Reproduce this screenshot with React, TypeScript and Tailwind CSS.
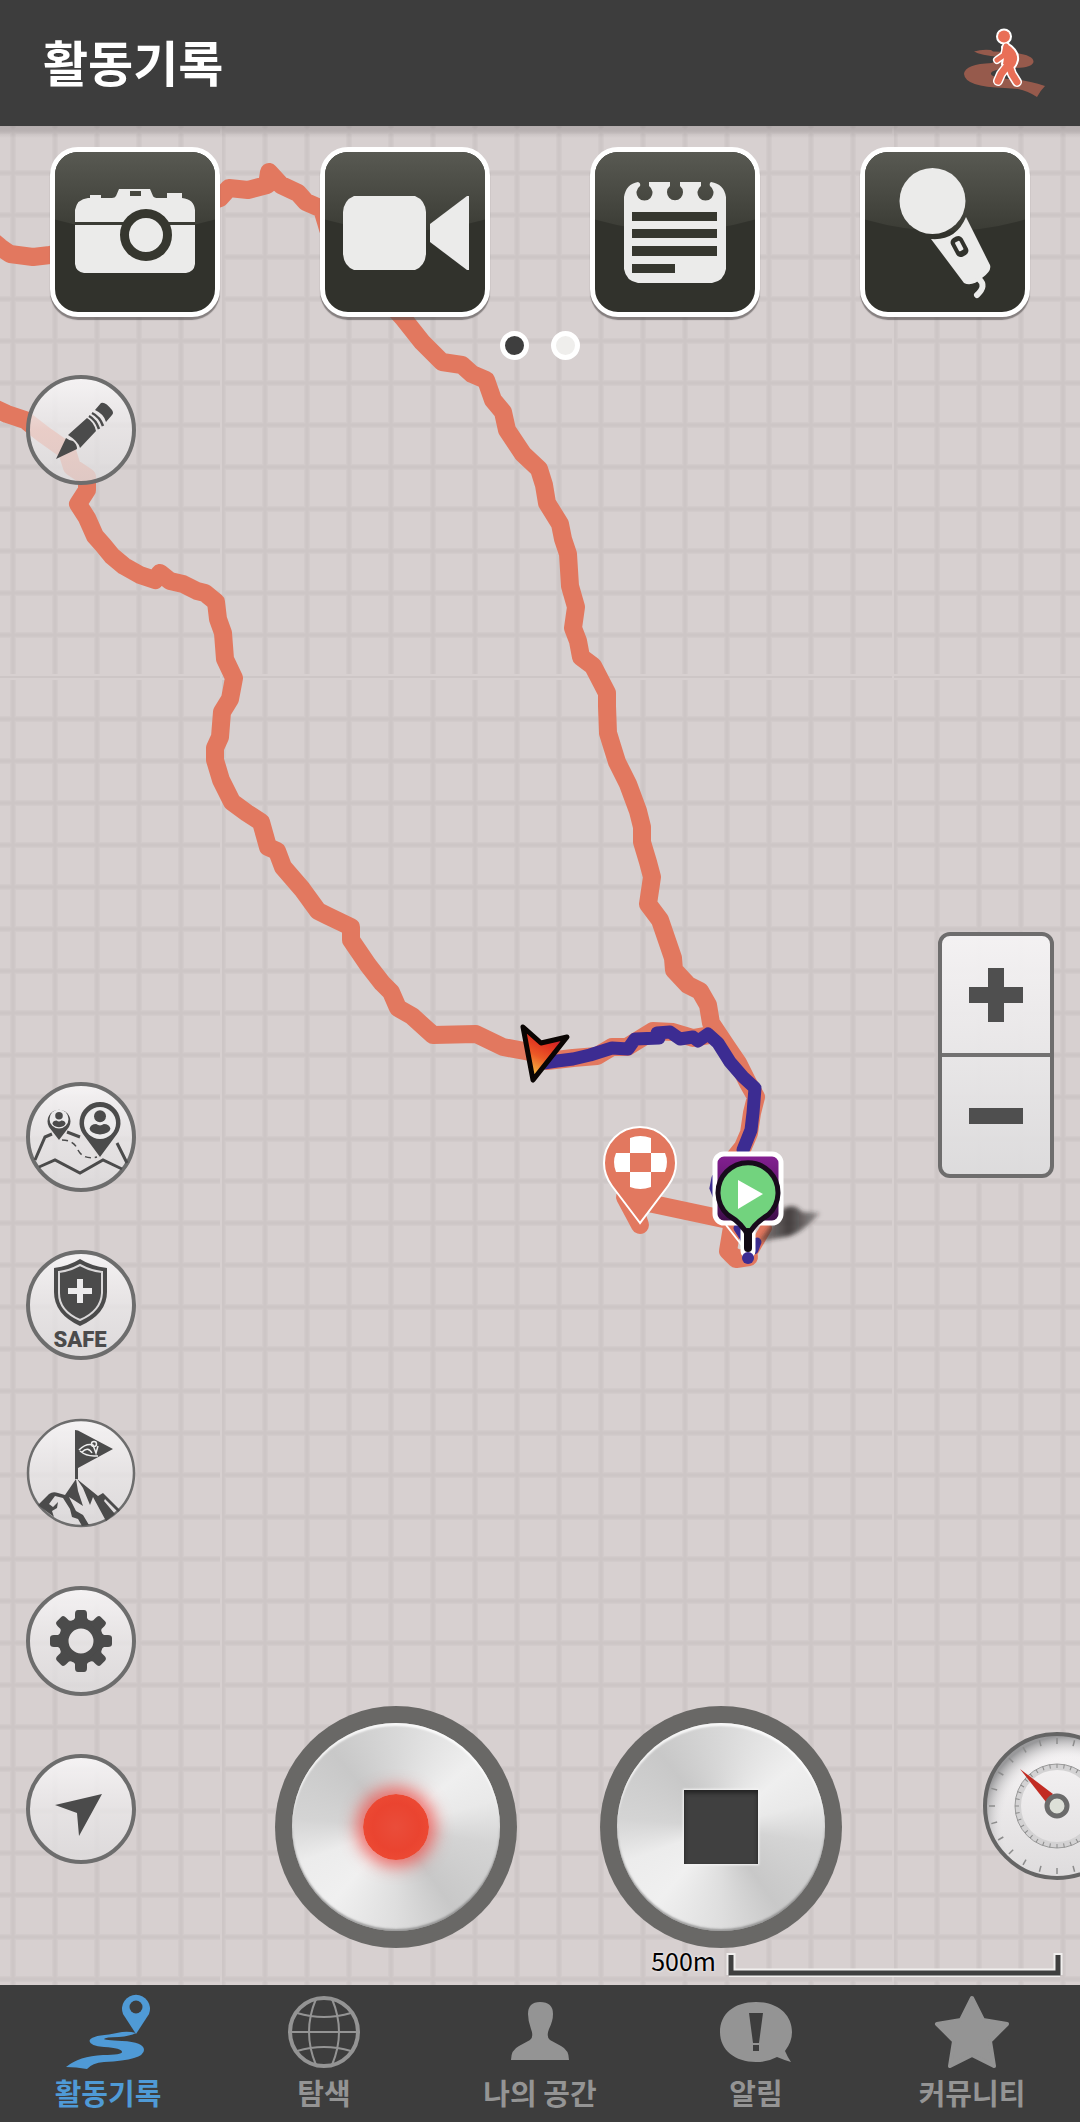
import type { ReactNode } from 'react';

function ActionButton({ label, children }: { label: string; children: ReactNode }) {
  return (
    <button
      aria-label={label}
      className="relative h-[170px] w-[170px] overflow-hidden rounded-[28px] border-[5px] border-white bg-[#31322c] shadow-[0_3px_1px_rgba(80,75,75,0.6)]"
    >
      <svg viewBox="5 5 160 160" className="block h-full w-full" fill="#ebebea" aria-hidden="true">
        <defs>
          <linearGradient id="gloss" x1="0" y1="0" x2="0" y2="1">
            <stop offset="0" stopColor="#5a5b54" />
            <stop offset="1" stopColor="#3b3c35" />
          </linearGradient>
        </defs>
        <path d="M0 0H170V71Q85 97 0 71Z" fill="url(#gloss)" />
        {children}
      </svg>
    </button>
  );
}

function RoundButton({ label, thin, children }: { label: string; thin?: boolean; children: ReactNode }) {
  return (
    <button aria-label={label} className="h-[110px] w-[110px] shrink-0 rounded-full">
      <svg viewBox="0 0 110 110" className="block h-full w-full" fill="#4b4b4b" aria-hidden="true">
        <defs>
          <linearGradient id="disc" x1="0" y1="0" x2="0" y2="1">
            <stop offset="0" stopColor="#f7f5f6" stopOpacity="0.95" />
            <stop offset="0.5" stopColor="#ebe9ea" stopOpacity="0.75" />
            <stop offset="1" stopColor="#dedcdd" stopOpacity="0.8" />
          </linearGradient>
        </defs>
        <circle cx="55" cy="55" r="53" fill="url(#disc)" stroke="#6d6d6d" strokeWidth={thin ? 2.5 : 4} />
        {children}
      </svg>
    </button>
  );
}

function KnobButton({ label, children }: { label: string; children: ReactNode }) {
  return (
    <button
      aria-label={label}
      className="flex h-[242px] w-[242px] shrink-0 items-center justify-center rounded-full bg-[#696866]"
    >
      <span className="flex h-[208px] w-[208px] items-center justify-center rounded-full bg-[conic-gradient(from_0deg,#d8d8d8,#efefef_50deg,#e9e9e9_75deg,#d4d4d4_100deg,#c8c8c8_145deg,#dedede_180deg,#f0f0f0_220deg,#ececec_250deg,#d4d4d4_275deg,#c8c8c8_320deg,#d8d8d8)] shadow-[inset_0_3px_2px_rgba(255,255,255,0.8),inset_0_-2px_2px_rgba(110,110,110,0.6)]">
        {children}
      </span>
    </button>
  );
}

function PersonBadge({ x, y, s }: { x: number; y: number; s: number }) {
  return (
    <g transform={`translate(${x} ${y}) scale(${s})`}>
      <circle cy="-7" r="6.3" />
      <path d="M-11 6Q-10 1 -4 1Q0 4 4 1Q10 1 11 6Q10 11 0 12Q-10 11 -11 6Z" />
    </g>
  );
}

const ticks = Array.from({ length: 24 }, (_, i) => i * 15);
const innerTicks = Array.from({ length: 36 }, (_, i) => i * 10);
const teeth = [0, 45, 90, 135, 180, 225, 270, 315];

function MapCanvas() {
  return (
    <svg
      viewBox="0 126 1080 1859"
      preserveAspectRatio="xMidYMin slice"
      className="absolute inset-0 h-full w-full"
      aria-hidden="true"
    >
      <defs>
        <pattern id="grid" x="13" y="131" width="42" height="42" patternUnits="userSpaceOnUse">
          <path d="M0 0V42M42 0V42M0 0H42M0 42H42" stroke="#d2cbcb" strokeWidth="6" />
          <path d="M0 0V42M42 0V42M0 0H42M0 42H42" stroke="#cdc6c6" strokeWidth="3" />
        </pattern>
        <linearGradient id="shade" x1="0" y1="0" x2="0" y2="1">
          <stop offset="0" stopColor="#7d7677" stopOpacity="0.4" />
          <stop offset="1" stopColor="#7d7677" stopOpacity="0" />
        </linearGradient>
        <linearGradient id="arrow" x1="0.7" y1="0" x2="0.3" y2="1">
          <stop offset="0" stopColor="#a8194e" />
          <stop offset="0.3" stopColor="#dd2c20" />
          <stop offset="0.6" stopColor="#ec5a26" />
          <stop offset="1" stopColor="#fbd34a" />
        </linearGradient>
        <linearGradient id="purple" x1="0" y1="0" x2="0" y2="1">
          <stop offset="0" stopColor="#852093" />
          <stop offset="1" stopColor="#3d0d49" />
        </linearGradient>
        <linearGradient id="cast" x1="0" y1="0" x2="1" y2="0">
          <stop offset="0" stopColor="#2b2727" stopOpacity="0.45" />
          <stop offset="0.5" stopColor="#2b2727" stopOpacity="0.85" />
          <stop offset="1" stopColor="#2b2727" stopOpacity="0.35" />
        </linearGradient>
        <filter id="soft" x="-30%" y="-30%" width="160%" height="160%">
          <feGaussianBlur stdDeviation="2" />
        </filter>
      </defs>
      <rect y="126" width="1080" height="1859" fill="#d7d0d0" />
      <rect y="126" width="1080" height="1859" fill="url(#grid)" />
      <path d="M221 126V1985M893 126V1985M0 675H1080M0 679H1080" stroke="#d7d0d0" strokeWidth="2" />
      <rect y="126" width="1080" height="12" fill="url(#shade)" />

      <g fill="none" stroke="#e2785f" strokeWidth="18" strokeLinejoin="round" strokeLinecap="round">
        <path d="M-6 242L0 247L10 254L33 257L50 255L90 245L220 198L229 188L248 190L267 185L269 172L281 185L298 193L306 202L322 209L328 229L340 250L403 318L422 342L442 362L462 365L472 374L486 380L493 400L503 412L507 430L523 454L539 469L544 485L547 503L560 524L563 539L568 554L570 586L576 607L573 628L578 641L581 657L593 666L607 693L607 706L608 733L612 746L617 762L628 784L638 811L642 827L642 842L648 862L652 877L648 904L660 920L673 958L674 970L688 985L700 991L708 1005L711 1023L727 1047L738 1063L748 1083L756 1097L752 1113L749 1133L743 1147L727 1167" />
        <path d="M-6 408L7 414L25 420L43 434L67 451L72 467L87 477L87 490L78 504L87 518L95 536L103 545L112 556L124 566L140 575L155 580L160 573L170 581L183 584L197 591L205 593L216 602L218 619L223 633L225 659L234 678L230 699L222 712L220 737L215 748L215 760L221 780L232 802L247 813L261 822L268 847L277 851L283 867L302 889L318 911L328 916L351 927L351 940L368 965L382 983L391 992L398 1008L412 1016L433 1035L476 1034L503 1047L530 1052L547 1061L573 1058L597 1056L612 1047L627 1047L653 1031L673 1032L693 1038L710 1035" />
        <path d="M625 1197L640 1225L630 1195L653 1204L733 1221L728 1251L736 1259L749 1257" />
        <path d="M749 1257L766 1228" strokeWidth="12" />
      </g>
      <path
        d="M537 1064L557 1061L573 1059L590 1055L612 1048L628 1049L635 1039L659 1038L657 1033L670 1032L680 1039L693 1037L698 1041L708 1034L718 1043L730 1062L743 1077L755 1088L753 1113L751 1130L743 1150"
        fill="none"
        stroke="#3c2c92"
        strokeWidth="13"
        strokeLinejoin="round"
        strokeLinecap="round"
      />
      <path
        d="M716 1178L714 1188L718 1198M738 1228L747 1242M757 1242L754 1250"
        fill="none"
        stroke="#3c2c92"
        strokeWidth="9"
        strokeLinecap="round"
      />
      <path
        d="M523 1027L541 1043L567 1037L533 1080Z"
        fill="url(#arrow)"
        stroke="#0a0503"
        strokeWidth="5"
        strokeLinejoin="round"
      />

      <path
        d="M640 1223L612 1186Q604 1175 604 1163A36 36 0 0 1 676 1163Q676 1175 668 1186Z"
        fill="#e2785f"
        stroke="#fff"
        strokeWidth="2"
      />
      <path
        d="M630 1153V1138Q640 1134 651 1138V1153ZM630 1172V1187Q640 1191 651 1187V1172ZM630 1153H616Q612 1162 616 1172H630ZM651 1153H665Q669 1162 665 1172H651Z"
        fill="#fff"
      />

      <path
        d="M758 1243Q770 1225 784 1208Q795 1203 802 1212L820 1213Q800 1235 785 1237Q770 1239 758 1243Z"
        fill="url(#cast)"
        filter="url(#soft)"
      />
      <path d="M726 1225L744 1248" stroke="#fff" strokeWidth="2" />
      <rect x="715" y="1154" width="66" height="69" rx="9" fill="url(#purple)" stroke="#fff" strokeWidth="5" />
      <path d="M748 1230V1251" fill="none" stroke="#fff" strokeWidth="15" strokeLinecap="round" />
      <circle cx="748" cy="1258" r="6" fill="#3c2c92" />
      <path
        d="M748 1248V1236Q743 1224 728 1215A30 30 0 1 1 768 1215Q753 1224 748 1236Z"
        fill="#72d37e"
        stroke="#180b1c"
        strokeWidth="5"
        strokeLinejoin="round"
      />
      <path d="M748 1232V1248" stroke="#120a14" strokeWidth="8" strokeLinecap="round" />
      <path d="M738 1180L763 1194L738 1209Z" fill="#fff" />
    </svg>
  );
}

function Gauge() {
  return (
    <svg viewBox="0 0 148 148" className="block h-full w-full" aria-hidden="true">
      <defs>
        <radialGradient id="dial" cx="0.58" cy="0.62" r="0.62">
          <stop offset="0.72" stopColor="#efedee" stopOpacity="0" />
          <stop offset="0.98" stopColor="#99999b" />
        </radialGradient>
        <linearGradient id="dialBase" x1="0" y1="0" x2="0" y2="1">
          <stop offset="0" stopColor="#f8f6f7" />
          <stop offset="1" stopColor="#dedcdd" />
        </linearGradient>
      </defs>
      <circle cx="74" cy="74" r="72" fill="url(#dialBase)" />
      <circle cx="74" cy="74" r="72" fill="url(#dial)" stroke="#656565" strokeWidth="4" />
      {ticks.map((a) => (
        <path key={a} d="M74 6V12" stroke="#8c8c8c" strokeWidth="1.5" transform={`rotate(${a} 74 74)`} />
      ))}
      <circle cx="74" cy="74" r="39" fill="none" stroke="#d3d2d3" strokeWidth="6" />
      <circle cx="74" cy="74" r="42" fill="none" stroke="#9a9a9a" strokeWidth="1" />
      {innerTicks.map((a) => (
        <path key={a} d="M74 32V36" stroke="#8c8c8c" strokeWidth="1" transform={`rotate(${a} 74 74)`} />
      ))}
      <path d="M37 37L70 62L63 70Z" fill="#c22b22" />
      <circle cx="74" cy="74" r="10" fill="#dde0d8" stroke="#6b6b6b" strokeWidth="5" />
    </svg>
  );
}

function TabLink({ label, viewBox, active, children }: { label: string; viewBox: string; active?: boolean; children: ReactNode }) {
  return (
    <a
      href="#"
      aria-current={active ? 'page' : undefined}
      className={
        active
          ? 'flex flex-col items-center pt-[5px] text-[#4f9ad6]'
          : 'flex flex-col items-center pt-[5px] text-[#949494]'
      }
    >
      <svg viewBox={viewBox} className="h-[84px] w-24" fill="currentColor" aria-hidden="true">
        {children}
      </svg>
      <span className="text-[29px] leading-[36px] font-bold whitespace-nowrap">{label}</span>
    </a>
  );
}

export default function App() {
  return (
    <div className='flex min-h-screen flex-col bg-[#3d3d3d] font-["Noto_Sans_CJK_KR",sans-serif]'>
      <header className="flex h-[126px] shrink-0 items-center justify-between pr-[30px] pl-[43px]">
        <h1 className="pb-1 text-[49px] leading-[64px] font-bold text-white">활동기록</h1>
        <button aria-label="걷기" className="h-[80px] w-[90px]">
          <svg viewBox="960 23 90 80" className="block h-full w-full" aria-hidden="true">
            <path
              d="M974 51.5Q982 49 991 50L993 51.5Q1034 52 1033.5 62Q1032 68 1014 68Q990 69 991 74Q992 78 1010 79Q1028 80 1045 86Q1040 91 1037 97Q1028 91 1018 89L1005 88Q965 87 964 74Q965 64 992 63L1000 57Q980 55 974 51.5Z"
              fill="#965a4c"
            />
            <g fill="none" strokeLinecap="round" strokeLinejoin="round">
              <g stroke="#fff">
                <circle cx="1004" cy="36.5" r="6" strokeWidth="4" />
                <path d="M1006 46L1004 55L997 60" strokeWidth="8" />
                <path d="M1008 65L1001 74L998 81M1009 65L1012 74L1017 82" strokeWidth="10" />
                <path d="M1003 47Q1007 43 1011 47Q1018 53 1017 60Q1015 68 1011 68L1003 64Q1005 55 1003 47Z" strokeWidth="4" fill="#fff" />
              </g>
              <g stroke="#e96f57">
                <path d="M1006 46L1004 55L997 60" strokeWidth="5" />
                <path d="M1008 65L1001 74L998 81M1009 65L1012 74L1017 82" strokeWidth="7" />
              </g>
            </g>
            <circle cx="1004" cy="36.5" r="6" fill="#e96f57" />
            <path d="M1003 47Q1007 43 1011 47Q1018 53 1017 60Q1015 68 1011 68L1003 64Q1005 55 1003 47Z" fill="#e96f57" />
          </svg>
        </button>
      </header>

      <main className="relative flex flex-1 flex-col overflow-hidden">
        <MapCanvas />

        <div className="relative grid grid-cols-4 justify-items-center pt-[21px]">
          <ActionButton label="사진">
            <path d="M25 63Q27 52 38 51H40V48H51V51H62Q65 51 66 49L69 42H100L103 49Q104 51 108 51H117V46H132V51Q144 52 145 63V117Q144 125 136 126H34Q26 125 25 117Z" />
            <path d="M80 44H91V49H80Z" fill="#474840" />
            <path d="M25 75H145V78H25Z" fill="#3b3c35" />
            <circle cx="96" cy="88" r="21.5" fill="#ebebea" stroke="#36372f" strokeWidth="9" />
          </ActionButton>
          <ActionButton label="동영상">
            <path d="M34 49H95Q105 53 106 65V107Q105 119 95 123H34Q24 119 23 107V65Q24 53 34 49Z" />
            <path d="M110 77L147 49H149V123H147L110 95Z" />
          </ActionButton>
          <ActionButton label="메모">
            <path d="M48 35Q51 36 50 39A8 8 0 1 0 59 39V35H80V39A8 8 0 1 0 90 39V35H111V39A8 8 0 1 0 120 39Q119 36 121 35Q134 37 136 50V122Q134 134 122 136H48Q36 134 34 122V50Q36 37 48 35Z" />
            <path d="M42 65H127V74H42ZM42 82H127V91H42ZM42 99H127V109H42ZM42 117H85V126H42Z" fill="#36372f" />
          </ActionButton>
          <ActionButton label="음성">
            <circle cx="72.5" cy="54" r="33" />
            <path d="M106 70L130 118Q132 124 122 131Q112 140 104 136L71 92Q96 94 106 70Z" />
            <rect x="93" y="89" width="13" height="21" rx="5" fill="#31322c" transform="rotate(-28 99.5 99.5)" />
            <rect x="97" y="94" width="5" height="10" rx="1" transform="rotate(-28 99.5 99.5)" />
            <path d="M119 132Q127 139 117 148" fill="none" stroke="#ebebea" strokeWidth="6" strokeLinecap="round" />
          </ActionButton>
        </div>

        <div className="relative mt-[14px] flex justify-center gap-[22px]">
          <button aria-label="1 페이지" aria-current="true" className="h-[29px] w-[29px] rounded-full border-[5px] border-white bg-[#3e3e3e]" />
          <button aria-label="2 페이지" className="h-[29px] w-[29px] rounded-full border-[5px] border-white bg-[#efeeec]" />
        </div>

        <div className="relative flex flex-1">
          <div className="flex shrink-0 flex-col gap-[58px] pt-[15px] pb-[121px] pl-[26px]">
            <RoundButton label="그리기">
              <path d="M30 84L40 63Q44 66 47 66Q51 69 51 74Z" />
              <path d="M42 60L61 43Q68 47 70 56L54 73Q52 66 42 60Z" />
              <path d="M63 41Q70 45 73 54M66 38Q74 42 77 51" fill="none" stroke="#4b4b4b" strokeWidth="2.5" />
              <path d="M69 35L75 28Q79 26 86 35Q88 38 86 40L80 47Q78 39 69 35Z" />
            </RoundButton>
            <div className="mt-auto flex flex-col gap-[58px] pt-[500px]">
              <RoundButton label="친구 위치">
                <path d="M33 58L23 45A11.5 11.5 0 1 1 43 45Z" />
                <circle cx="33" cy="37" r="9.5" fill="#ecebec" />
                <PersonBadge x={33} y={38} s={0.6} />
                <path d="M74 75L57 52A20.5 20.5 0 1 1 91 52Z" />
                <circle cx="74" cy="41" r="16" fill="#ecebec" />
                <PersonBadge x={74} y={41} s={0.95} />
                <g fill="none" stroke="#4b4b4b" strokeWidth="3">
                  <path d="M9 78L19 55L26 52M41 50L54 55M91 61L101 81M13 85L29 78L54 91L77 78L96 87" />
                  <path d="M36 58Q48 58 52 68Q57 78 71 75" strokeWidth="1.5" strokeDasharray="6 4" />
                </g>
              </RoundButton>
              <RoundButton label="안전">
                <path d="M54 9Q65 16 81 18V42Q81 64 54 76Q28 64 28 42V18Q43 16 54 9Z" />
                <path d="M54 15Q65 21 76 22V43Q75 61 54 70Q33 61 33 43V22Q43 21 54 15Z" fill="none" stroke="#dad8d9" strokeWidth="2" />
                <path d="M51 29H57V38H66V44H57V53H51V44H42V38H51Z" fill="#ecebec" />
                <text x="54" y="97" textAnchor="middle" className="font-[Roboto,sans-serif] text-[22px] font-black">
                  SAFE
                </text>
              </RoundButton>
              <RoundButton label="정상 도전" thin>
                <path d="M49 12L52 12.5L87 31L52 50V61H49Z" />
                <path d="M53 32Q60 25 67 27L70 35L72 28M54 33Q60 38 68 38M56 34Q62 28 66 35M68 38H72" fill="none" stroke="#eee" strokeWidth="1.5" />
                <circle cx="68" cy="26" r="2.5" fill="none" stroke="#eee" strokeWidth="1.5" />
                <path d="M12 87L23 76Q27 73 32 75L39 77L50 61L52 73L57 88L43 79L50 93L57 97L63 107L56 108L52 101L46 99L44 91L37 80L29 78L23 86L27 89L32 84L31 90L26 93L28 99Z" />
                <path d="M51 61L72 78L77 75L94 92L92 94L79 81L78 83L89 96L80 103L67 79L64 87L57 70Z" />
              </RoundButton>
              <RoundButton label="설정">
                <circle cx="55" cy="55" r="17.5" fill="none" stroke="#4b4b4b" strokeWidth="10" />
                {teeth.map((a) => (
                  <path key={a} d="M46 36L49 32V28Q49 24 52 24H58Q61 24 61 28V32L64 36Z" transform={`rotate(${a} 55 55)`} />
                ))}
              </RoundButton>
              <RoundButton label="현재 위치">
                <path d="M76 40L29 51L51 59L53 82Z" />
              </RoundButton>
            </div>
          </div>

          <div className="flex min-w-0 flex-1 flex-col">
            <div className="mt-[572px] mr-[26px] flex h-[246px] w-[116px] flex-col divide-y-4 divide-[#727171] self-end overflow-hidden rounded-xl border-4 border-[#6e6d6d] bg-linear-to-b from-[#f5f3f4]/95 to-[#dddcdd]/95">
              <button aria-label="확대" className="flex flex-1 items-center justify-center">
                <svg viewBox="0 0 54 54" className="h-[54px] w-[54px]" fill="#4f4f4f" aria-hidden="true">
                  <path d="M19 0H35V19H54V35H35V54H19V35H0V19H19Z" />
                </svg>
              </button>
              <button aria-label="축소" className="flex flex-1 items-center justify-center">
                <span className="h-4 w-[54px] bg-[#4f4f4f]" />
              </button>
            </div>

            <div className="mt-auto flex pl-[139px]">
              <KnobButton label="기록 시작">
                <span className="h-[66px] w-[66px] rounded-full bg-[radial-gradient(circle,#ea4d3a,#ea4430_50%,#ef5038)] shadow-[0_0_16px_7px_rgba(240,85,80,0.8)]" />
              </KnobButton>
              <div className="w-[83px] shrink-0" />
              <KnobButton label="기록 정지">
                <span className="h-[74px] w-[74px] bg-[#404040] shadow-[inset_0_3px_4px_#222,0_0_2px_1px_#f4f4f4]" />
              </KnobButton>
              <button aria-label="계기판" className="mt-[26px] ml-[141px] h-[148px] w-[148px] shrink-0">
                <Gauge />
              </button>
            </div>

            <div className="flex h-[37px] items-start justify-end gap-[10px] pr-[17px]">
              <span className="text-[25px] leading-[24px] text-black [text-shadow:0_0_3px_#fff]">500m</span>
              <svg viewBox="0 0 337 24" className="mt-[5px] h-6 w-[337px]" fill="none" aria-hidden="true">
                <path d="M5 0V22M3 20H334M332 0V22" stroke="#f1efee" strokeWidth="9" />
                <path d="M5 2V20H332V2" stroke="#3f3f3f" strokeWidth="5" />
              </svg>
            </div>
          </div>
        </div>
      </main>

      <nav className="grid h-[137px] shrink-0 grid-cols-5" aria-label="하단 메뉴">
        <TabLink label="활동기록" viewBox="60 1990 96 84" active>
          <path d="M136 2034L123 2014A14 14 0 1 1 149 2014Z" />
          <circle cx="136" cy="2007" r="6.5" fill="#3d3d3d" />
          <path d="M136 2033Q129 2031 122 2032L109 2034.5Q90 2036 89.5 2041Q90 2046 104 2047Q122 2048 122 2052Q122 2055 103 2055Q79 2056 66 2067Q76 2067 87 2069Q92 2063 104 2062Q144 2060 144 2050Q144 2042 122 2041Q104 2040 104 2039Q105 2037 119 2037Q130 2036 136 2033Z" />
        </TabLink>
        <TabLink label="탐색" viewBox="276 1990 96 84">
          <g fill="none" stroke="currentColor" strokeWidth="2">
            <circle cx="324" cy="2032" r="34" strokeWidth="4" />
            <path d="M290 2032H358M316 1999Q302 2032 316 2065M332 1999Q346 2032 332 2065M297 2013Q324 2021 351 2013M297 2051Q324 2043 351 2051" />
          </g>
        </TabLink>
        <TabLink label="나의 공간" viewBox="492 1990 96 84">
          <path d="M540 2002Q553 2002 553 2014Q553 2021 549 2029Q546 2037 550 2040L561 2046Q569 2050 569 2060H511Q511 2050 519 2046L530 2040Q534 2037 531 2029Q528 2021 528 2014Q528 2002 540 2002Z" />
        </TabLink>
        <TabLink label="알림" viewBox="708 1990 96 84">
          <path d="M756 2002C778 2002 792 2015 792 2032Q792 2042 785 2051Q788 2058 791 2062Q784 2060 777 2057Q768 2062 756 2062C735 2062 720 2050 720 2032C720 2014 734 2002 756 2002Z" />
          <path d="M749 2013H763L759 2043H753ZM753 2045H759V2051H753Z" fill="#3d3d3d" />
        </TabLink>
        <TabLink label="커뮤니티" viewBox="924 1990 96 84">
          <path
            d="M972 1998L983 2020L1007 2024L990 2041L994 2066L972 2055L950 2066L954 2041L937 2024L961 2020Z"
            stroke="currentColor"
            strokeWidth="4"
            strokeLinejoin="round"
          />
        </TabLink>
      </nav>
    </div>
  );
}
